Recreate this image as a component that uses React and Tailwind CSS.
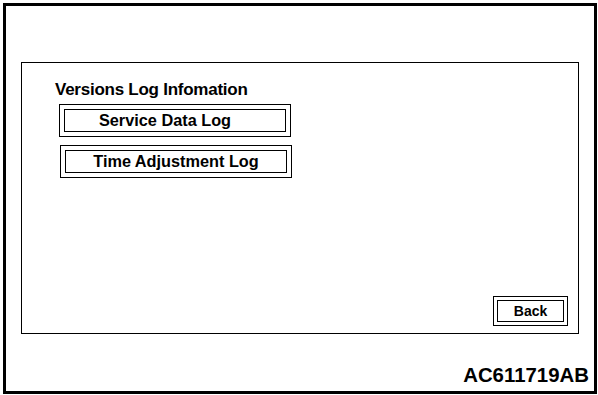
export default function App() {
  const font = { fontFamily: '"Liberation Sans", Arial, sans-serif' }

  return (
    <div className="w-[598px] h-[395px] bg-white overflow-hidden" style={font}>
      <div className="ml-[3px] mt-[3px] w-[594px] h-[391px] border-[3px] border-black flex flex-col">
        <div className="ml-[15px] mt-[56px] w-[558px] h-[272px] border border-black flex flex-col">
          <div className="pl-[33px] pt-[17px] text-[17px] leading-[20px] font-bold text-black tracking-[-0.25px]">
            Versions Log Infomation
          </div>

          <button className="ml-[37px] mt-[4px] w-[232px] h-[33px] border border-black p-[4px] self-start">
            <span className="flex h-full items-center justify-center border border-black pr-[20px] text-[16.3px] font-bold text-black">
              Service Data Log
            </span>
          </button>

          <button className="ml-[38px] mt-[8px] w-[232px] h-[33px] border border-black p-[4px] self-start">
            <span className="flex h-full items-center justify-center border border-black text-[16.3px] font-bold text-black">
              Time Adjustment Log
            </span>
          </button>

          <button className="mt-auto mb-[7px] mr-[10px] self-end w-[75px] h-[30px] border border-black p-[3px]">
            <span className="flex h-full items-center justify-center border border-black text-[14px] font-bold text-black">
              Back
            </span>
          </button>
        </div>

        <div className="mt-[31px] pr-[5px] text-right text-[20.4px] leading-[20px] font-bold text-black">
          AC611719AB
        </div>
      </div>
    </div>
  )
}
